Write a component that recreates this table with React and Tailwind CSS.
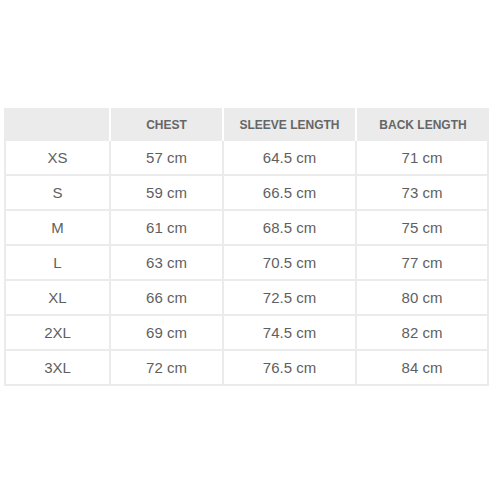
const rows = [
  ['XS', '57 cm', '64.5 cm', '71 cm'],
  ['S', '59 cm', '66.5 cm', '73 cm'],
  ['M', '61 cm', '68.5 cm', '75 cm'],
  ['L', '63 cm', '70.5 cm', '77 cm'],
  ['XL', '66 cm', '72.5 cm', '80 cm'],
  ['2XL', '69 cm', '74.5 cm', '82 cm'],
  ['3XL', '72 cm', '76.5 cm', '84 cm'],
];

const headers = ['', 'CHEST', 'SLEEVE LENGTH', 'BACK LENGTH'];

export default function App() {
  return (
    <div className="w-[500px] h-[500px] bg-white pt-[108px] pl-[4px] font-['Liberation_Sans',Arial,sans-serif]">
      <div className="w-[485px]">
        <div className="grid grid-cols-[107px_113px_133px_132px] h-[33px] bg-[#ebebeb] text-[12px] font-bold text-[#666666]">
          {headers.map((h, i) => (
            <div key={i} className={`flex items-center justify-center ${i < 3 ? 'border-r-2 border-white' : ''}`}>
              {h}
            </div>
          ))}
        </div>
        <div className="border-l-2 border-[#ebebeb]">
          {rows.map((r) => (
            <div key={r[0]} className="grid grid-cols-[105px_113px_133px_132px] h-[35px] border-b-2 border-[#ebebeb] text-[15px] text-[#5f5f5f]">
              {r.map((c, i) => (
                <div key={i} className="flex items-center justify-center pt-[2px] border-r-2 border-[#ebebeb]">
                  {c}
                </div>
              ))}
            </div>
          ))}
        </div>
      </div>
    </div>
  );
}
